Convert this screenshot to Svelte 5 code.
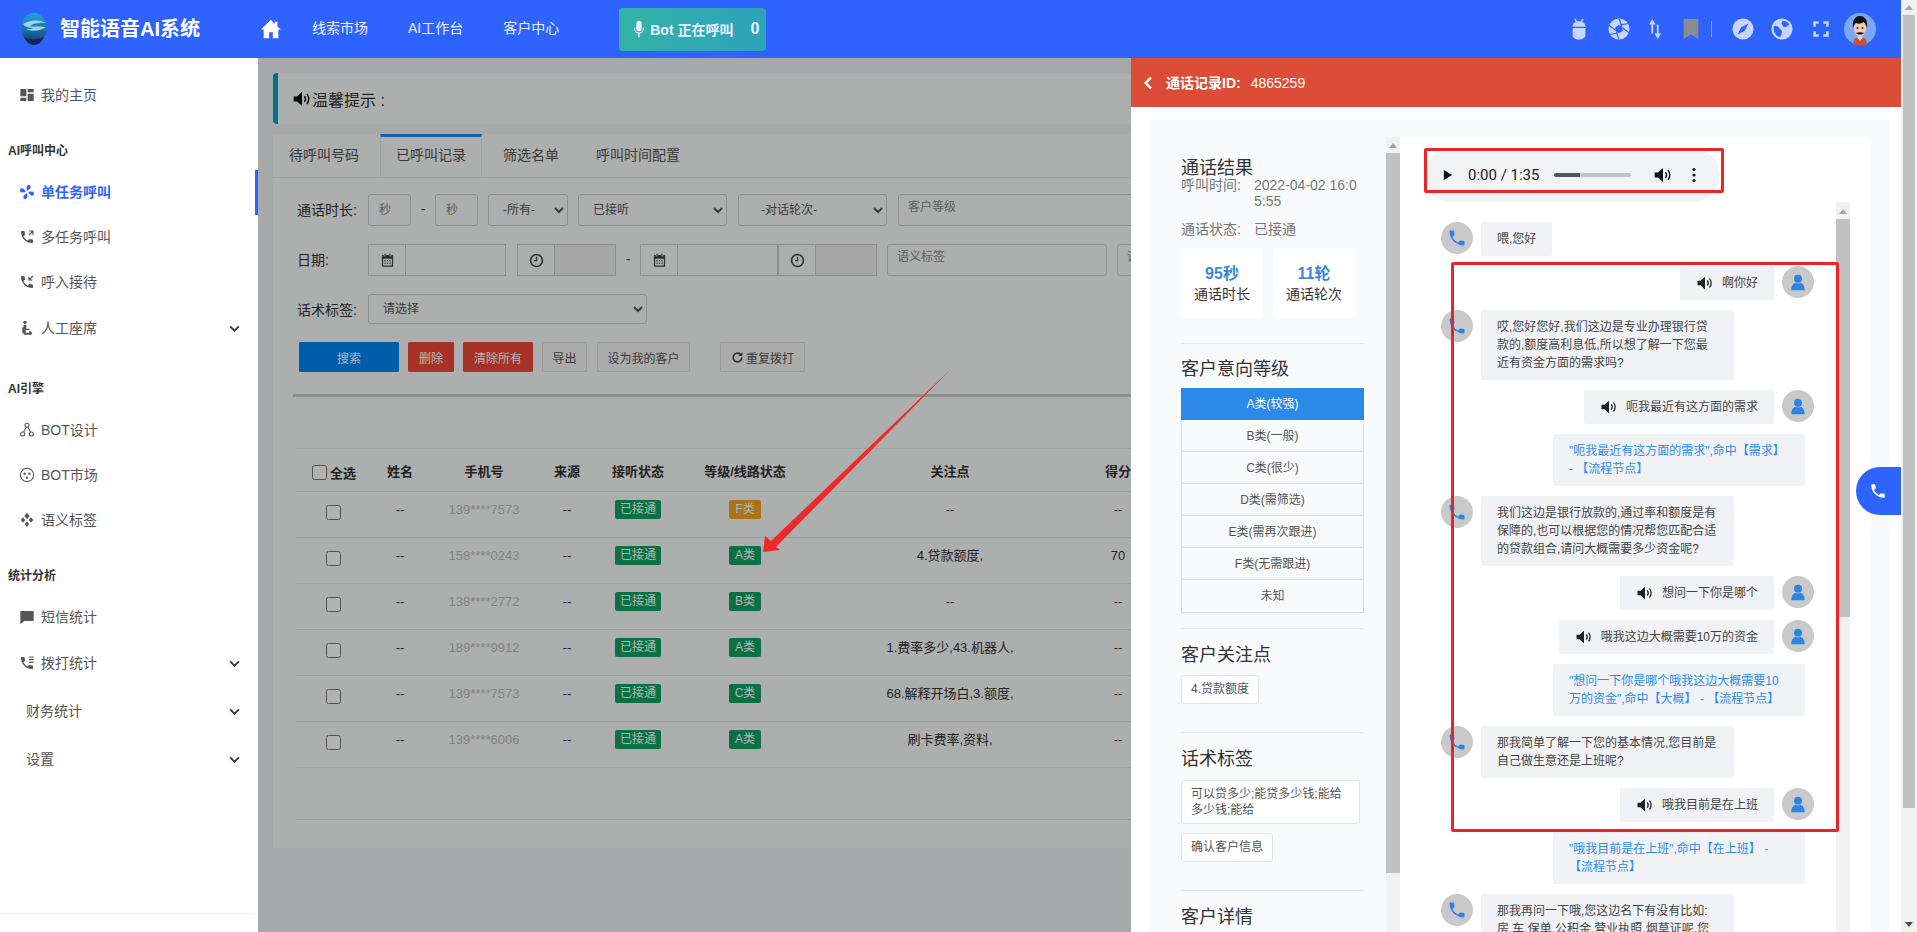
<script>
  const phone = '<path d="M6.6 10.8c1.4 2.8 3.8 5.1 6.6 6.6l2.2-2.2c.3-.3.7-.4 1-.2 1.1.4 2.3.6 3.6.6.6 0 1 .4 1 1V20c0 .6-.4 1-1 1C10.6 21 3 13.4 3 4c0-.6.4-1 1-1h3.5c.6 0 1 .4 1 1 0 1.3.2 2.5.6 3.6.1.3 0 .7-.2 1L6.6 10.8z"/>';
  const icons = {
    dash: '<path d="M2 3h9v11H2zM13 3h9v5h-9zM13 10h9v11h-9zM2 16h9v5H2z"/>',
    fan: '<path d="M12 10c-1-4-1-8 2-8.500 3.500-.5 5 3.500 1.500 6.500-1 .9-2.200 1.500-3.500 2zM14 12c4-1 8-1 8.500 2 .5 3.500-3.500 5-6.500 1.500-.9-1-1.500-2.200-2-3.500zM12 14c1 4 1 8-2 8.500-3.500.5-5-3.500-1.500-6.500 1-.9 2.200-1.500 3.500-2zM10 12c-4 1-8 1-8.500-2C1 6.500 5 5 8 8.500c.9 1 1.500 2.200 2 3.500z"/>',
    callout: phone + '<path d="M15 3h6v6M21 3l-6 6" fill="none" stroke="currentColor" stroke-width="1.800"/>',
    callin: phone + '<path d="M21 3l-6 6M15 4v5h5" fill="none" stroke="currentColor" stroke-width="1.800"/>',
    seat: '<circle cx="9" cy="3.500" r="2.500"/><path d="M7 7h4v6h5v2h-5.500L10 14v5h8v3H7zM5 11v9h2v-9z"/><path d="M15 17h3l2 4-2 1-1.500-3H15z"/>',
    nodes: '<g fill="none" stroke="currentColor" stroke-width="1.600"><circle cx="12" cy="5" r="3"/><circle cx="5.500" cy="18" r="3"/><circle cx="18.500" cy="18" r="3"/><path d="M10.500 8 7 15M13.500 8l3.500 7"/></g>',
    market: '<circle cx="12" cy="12" r="10" fill="none" stroke="currentColor" stroke-width="1.600"/><circle cx="8.500" cy="10" r="1.800"/><circle cx="15.500" cy="10" r="1.800"/><circle cx="12" cy="16" r="1.800"/>',
    tags: '<path d="M12 1l4 5-4 5-4-5zM6 8l3.500 4L6 16l-3.500-4zM18 8l3.500 4-3.500 4-3.500-4zM12 14l3 4-3 5-3-5z"/>',
    sms: '<path d="M2 3h20v15H8l-6 5z"/>',
    calllist: phone + '<path d="M15 3h7M15 7h7M15 11h7" fill="none" stroke="currentColor" stroke-width="1.800"/>',
    chev: '<path d="M5 8.500l7 7 7-7" fill="none" stroke="currentColor" stroke-width="2.800"/>',
    home: '<path d="M12 2 1 12.500h3V22h6v-6.500h4V22h6v-9.500h3L19 9.500V4h-3v2.700z"/>',
    mic: '<path d="M12 1a3.500 3.500 0 0 0-3.500 3.500v7a3.500 3.500 0 0 0 7 0v-7A3.500 3.500 0 0 0 12 1zM5.500 10v1.500a6.500 6.500 0 0 0 5.500 6.400V23h2v-5.100a6.500 6.500 0 0 0 5.500-6.400V10h-1.500v1.500a5 5 0 0 1-10 0V10z"/>',
    android: '<path d="M7.500 1l2 3.500M16.500 1l-2 3.500" stroke="currentColor" stroke-width="1.500"/><path d="M12 3.500c-4 0-7 2.500-7 6h14c0-3.500-3-6-7-6zM5 11h14v7.500c0 3-3 5-7 5s-7-2-7-5z"/>',
    shutter: '<circle cx="12" cy="12" r="11.500"/><g stroke="#2f63ff" stroke-width="1.300"><path d="M12 .5l3 8.500M22.500 6l-9 1.500M23 16l-7-5M12 23.500 9 15M1.500 18l9-1.500M1 8l7 5"/></g><path d="M12 7.500l4 2.200v4.600l-4 2.200-4-2.200V9.700z" fill="#2f63ff"/>',
    arrows: '<path d="M9 1 5.500 7H8v10h2V7h2.500zM15 23l3.500-6H16V7h-2v10h-2.500z"/>',
    bookmark: '<path d="M4 1h16v22l-8-5-8 5z"/>',
    compass: '<circle cx="12" cy="12" r="11.500"/><path d="M18 6l-4 8-8 4 4-8z" fill="#2f63ff"/>',
    globe: '<circle cx="12" cy="12" r="11.500"/><path d="M3 9c3-1 5 0 6 2s3 2 3 4-1 4-2 6c-4-1-7-5-7-9zM13 3c3 0 6 2 7 4-2 1-3 3-5 3s-2-2-3-3 0-3 1-4z" fill="#2f63ff"/>',
    full: '<path d="M5 9.500V5h4.500M14.500 5H19v4.500M19 14.500V19h-4.500M9.500 19H5v-4.500" fill="none" stroke="currentColor" stroke-width="2.800"/>',
    sound: '<path d="M2 9v6h4l6 5.500v-17L6 9z"/><path d="M15 8.500c1.500 2 1.500 5 0 7M18 6c2.500 3.500 2.500 8.500 0 12" fill="none" stroke="currentColor" stroke-width="1.700"/>',
    cal: '<path d="M7 1h2v3H7zM15 1h2v3h-2zM3 3h3v2h3V3h6v2h3V3h3v19H3zM5 9v11h14V9z"/><path d="M7 11h2v2H7zM11 11h2v2h-2zM15 11h2v2h-2zM7 15h2v2H7zM11 15h2v2h-2zM15 15h2v2h-2z"/>',
    clock: '<circle cx="12" cy="12" r="9.500" fill="none" stroke="currentColor" stroke-width="2.500"/><path d="M11 6h2v7H8v-2h3z"/>',
    refresh: '<path d="M20 12a8 8 0 1 1-2.500-5.800" fill="none" stroke="currentColor" stroke-width="3"/><path d="M21 2v7h-7z"/>',
    back: '<path d="M15 4l-8 8 8 8" fill="none" stroke="currentColor" stroke-width="3.500"/>',
    person: '<circle cx="12" cy="8" r="4.800"/><path d="M4 22c0-6 3-8.500 5-9 1.800 1 4.200 1 6 0 2 .5 5 3 5 9z"/>',
    phone
  };

  const menu = [
    { t: 'item', icon: 'dash', label: '我的主页' },
    { t: 'head', label: 'AI呼叫中心' },
    { t: 'item', icon: 'fan', label: '单任务呼叫', active: true },
    { t: 'item', icon: 'callout', label: '多任务呼叫' },
    { t: 'item', icon: 'callin', label: '呼入接待' },
    { t: 'item', icon: 'seat', label: '人工座席', more: true, tall: true },
    { t: 'head', label: 'AI引擎', tall: true },
    { t: 'item', icon: 'nodes', label: 'BOT设计' },
    { t: 'item', icon: 'market', label: 'BOT市场' },
    { t: 'item', icon: 'tags', label: '语义标签' },
    { t: 'head', label: '统计分析' },
    { t: 'item', icon: 'sms', label: '短信统计' },
    { t: 'item', icon: 'calllist', label: '拨打统计', more: true, tall: true },
    { t: 'item', label: '财务统计', more: true, tall: true },
    { t: 'item', label: '设置', more: true, tall: true }
  ];

  const rows = [
    { phone: '139****7573', cls: 'F类', warn: true, focus: '--', score: '--' },
    { phone: '158****0243', cls: 'A类', focus: '4.贷款额度,', score: '70' },
    { phone: '138****2772', cls: 'B类', focus: '--', score: '--' },
    { phone: '189****9912', cls: 'A类', focus: '1.费率多少,43.机器人,', score: '--' },
    { phone: '139****7573', cls: 'C类', focus: '68.解释开场白,3.额度,', score: '--' },
    { phone: '139****6006', cls: 'A类', focus: '刷卡费率,资料,', score: '--' }
  ];

  const levels = ['A类(较强)', 'B类(一般)', 'C类(很少)', 'D类(需筛选)', 'E类(需再次跟进)', 'F类(无需跟进)', '未知'];

  const chat = [
    { k: 'bot', text: '喂,您好' },
    { k: 'user', text: '啊你好' },
    { k: 'bot', text: '哎,您好您好,我们这边是专业办理银行贷款的,额度高利息低,所以想了解一下您最近有资金方面的需求吗?' },
    { k: 'user', text: '呃我最近有这方面的需求' },
    { k: 'hit', text: '"呃我最近有这方面的需求",命中【需求】 - 【流程节点】' },
    { k: 'bot', text: '我们这边是银行放款的,通过率和额度是有保障的,也可以根据您的情况帮您匹配合适的贷款组合,请问大概需要多少资金呢?' },
    { k: 'user', text: '想问一下你是哪个' },
    { k: 'user', text: '哦我这边大概需要10万的资金' },
    { k: 'hit', text: '"想问一下你是哪个哦我这边大概需要10万的资金",命中【大概】 - 【流程节点】' },
    { k: 'bot', text: '那我简单了解一下您的基本情况,您目前是自己做生意还是上班呢?' },
    { k: 'user', text: '哦我目前是在上班' },
    { k: 'hit', text: '"哦我目前是在上班",命中【在上班】 - 【流程节点】' },
    { k: 'bot', text: '那我再问一下哦,您这边名下有没有比如:房,车,保单,公积金,营业执照,烟草证呢,您这边有其中的哪一个呢?' }
  ];
</script>

{#snippet ic(name, cls = '')}
  <svg class="ic {cls}" viewBox="0 0 24 24" fill="currentColor" aria-hidden="true">{@html icons[name]}</svg>
{/snippet}

<div class="page">
  <div class="viewport">
    <header class="top">
      <div class="brand">
        <svg class="logo" viewBox="0 0 28 36" aria-hidden="true">
          <defs>
            <linearGradient id="lg" x1="0" y1="0" x2="0" y2="1">
              <stop offset="0" stop-color="#1fa6d8" />
              <stop offset=".55" stop-color="#1a6fb0" />
              <stop offset="1" stop-color="#1b3a6b" />
            </linearGradient>
          </defs>
          <ellipse cx="14" cy="17" rx="13" ry="15" fill="url(#lg)" />
          <path d="M3 13c6-4 16-5 23-1-5-1-13 0-16 3 3 1 9 0 16 1-5 4-15 5-20 2 3 0 6 0 8-1-5 0-9-1-11-4z" fill="#9fd3e6" />
          <path d="M4 26c6 3 14 3 20 0-2 5-6 8-10 8s-8-3-10-8z" fill="#14284f" />
        </svg>
        <span class="title">智能语音AI系统</span>
      </div>
      <span class="home">{@render ic('home')}</span>
      <nav class="nav">
        <span>线索市场</span>
        <span>AI工作台</span>
        <span>客户中心</span>
      </nav>
      <div class="botbtn">
        {@render ic('mic', 'mic')}
        <span>Bot 正在呼叫</span>
        <b>0</b>
      </div>
      <div class="tools">
        <div class="toolgroup first">
          <span class="tool android">{@render ic('android')}</span>
          <span class="tool">{@render ic('shutter')}</span>
          <span class="tool">{@render ic('arrows')}</span>
          <span class="tool gray">{@render ic('bookmark')}</span>
        </div>
        <i class="vline"></i>
        <div class="toolgroup second">
          <span class="tool">{@render ic('compass')}</span>
          <span class="tool">{@render ic('globe')}</span>
          <span class="tool">{@render ic('full')}</span>
        </div>
        <svg class="avatar" viewBox="0 0 32 32" aria-hidden="true">
          <circle cx="16" cy="16" r="16" fill="#7ea6f4" />
          <path d="M9 32c0-6 3-8 7-8s7 2 7 8z" fill="#c8503e" />
          <path d="M13 24h6l-3 4z" fill="#f4d7c0" />
          <ellipse cx="16" cy="15" rx="6" ry="9" fill="#f1cdb0" />
          <path d="M9 15C8 6 12 3 16 3s8 3 7 12c-1-3-2-5-3-6-3 2-6 2-8 1-2 1-2 3-3 5z" fill="#141110" />
          <path d="M12 20c2-1 6-1 8 0-1 2-7 2-8 0z" fill="#1f1510" />
          <circle cx="13.500" cy="15" r=".9" fill="#222" /><circle cx="18.500" cy="15" r=".9" fill="#222" />
        </svg>
      </div>
    </header>

    <div class="body">
      <aside class="side">
        {#each menu as m}
          {#if m.t === 'head'}
            <div class="head" class:tall={m.tall}>{m.label}</div>
          {:else}
            <div class="item" class:active={m.active} class:tall={m.tall} class:plain={!m.icon}>
              {#if m.icon}{@render ic(m.icon, 'mi')}{/if}
              <span class="lbl">{m.label}</span>
              {#if m.more}{@render ic('chev', 'chev')}{/if}
            </div>
          {/if}
        {/each}
        <div class="sidefoot"></div>
      </aside>

      <main class="main">
        <div class="content">
          <div class="tip">{@render ic('sound', 'tipic')}<span>温馨提示 :</span></div>

          <section class="card">
            <div class="tabs">
              <span class="tab">待呼叫号码</span>
              <span class="tab on">已呼叫记录</span>
              <span class="tab">筛选名单</span>
              <span class="tab">呼叫时间配置</span>
            </div>

            <div class="filters">
              <div class="frow">
                <label class="flabel" for="d1">通话时长:</label>
                <input id="d1" class="ctl secs" placeholder="秒" />
                <span class="dash">-</span>
                <input class="ctl secs" placeholder="秒" />
                <select class="ctl s80"><option>-所有-</option></select>
                <select class="ctl s149"><option>已接听</option></select>
                <select class="ctl s149"><option>-对话轮次-</option></select>
                <input class="ctl tagbox" placeholder="客户等级" />
              </div>
              <div class="frow">
                <span class="flabel">日期:</span>
                <div class="group">
                  <span class="addon">{@render ic('cal', 'addic')}</span>
                  <span class="gfield date"></span>
                </div>
                <div class="group">
                  <span class="addon">{@render ic('clock', 'addic')}</span>
                  <span class="gfield time"></span>
                </div>
                <span class="dash">-</span>
                <div class="group">
                  <span class="addon">{@render ic('cal', 'addic')}</span>
                  <span class="gfield date"></span>
                </div>
                <div class="group joined">
                  <span class="addon">{@render ic('clock', 'addic')}</span>
                  <span class="gfield time"></span>
                </div>
                <input class="ctl tag2" placeholder="语义标签" />
                <input class="ctl tag3" placeholder="话术标签" />
              </div>
              <div class="frow short">
                <span class="flabel">话术标签:</span>
                <select class="ctl s279"><option>请选择</option></select>
              </div>
              <div class="btns">
                <button class="btn primary">搜索</button>
                <button class="btn danger d1">删除</button>
                <button class="btn danger d2">清除所有</button>
                <button class="btn d3">导出</button>
                <button class="btn d4">设为我的客户</button>
                <button class="btn d5">{@render ic('refresh', 'ref')}重复拨打</button>
              </div>
            </div>

            <div class="rule"></div>

            <table class="tbl">
              <colgroup>
                <col class="c1" /><col class="c2" /><col class="c3" /><col class="c4" /><col class="c5" /><col class="c6" /><col class="c7" /><col class="c8" />
              </colgroup>
              <thead>
                <tr>
                  <th class="all"><input type="checkbox" class="chk" /><span>全选</span></th>
                  <th>姓名</th>
                  <th>手机号</th>
                  <th>来源</th>
                  <th>接听状态</th>
                  <th>等级/线路状态</th>
                  <th>关注点</th>
                  <th>得分</th>
                </tr>
              </thead>
              <tbody>
                {#each rows as r}
                  <tr>
                    <td><input type="checkbox" class="chk" /></td>
                    <td>--</td>
                    <td class="num">{r.phone}</td>
                    <td>--</td>
                    <td><span class="badge st">已接通</span></td>
                    <td><span class="badge" class:warn={r.warn}>{r.cls}</span></td>
                    <td>{r.focus}</td>
                    <td>{r.score}</td>
                  </tr>
                {/each}
              </tbody>
            </table>
            <div class="tblfoot"></div>
          </section>
        </div>

        <div class="dim"></div>

        <div class="drawer">
          <div class="dhead">
            {@render ic('back', 'backic')}
            <b>通话记录ID:</b>
            <span>4865259</span>
          </div>
          <div class="dbody">
            <div class="dinner">
              <div class="info">
                <h3 class="h">通话结果</h3>
                <div class="meta"><span class="mk">呼叫时间:</span><span class="mv">2022-04-02 16:05:55</span></div>
                <div class="meta gap"><span class="mk">通话状态:</span><span class="mv">已接通</span></div>
                <div class="stats">
                  <div class="stat"><b>95秒</b><span>通话时长</span></div>
                  <div class="stat"><b>11轮</b><span>通话轮次</span></div>
                </div>

                <div class="part p1">
                  <h3 class="h">客户意向等级</h3>
                  <ul class="levels">
                    {#each levels as l, i}
                      <li class:sel={i === 0}>{l}</li>
                    {/each}
                  </ul>
                </div>

                <div class="part p2">
                  <h3 class="h">客户关注点</h3>
                  <span class="chip c-a">4.贷款额度</span>
                </div>

                <div class="part p3">
                  <h3 class="h">话术标签</h3>
                  <div class="tagtext">可以贷多少;能贷多少钱;能给多少钱;能给</div>
                  <span class="chip c-b">确认客户信息</span>
                </div>

                <div class="part p4">
                  <h3 class="h">客户详情</h3>
                </div>
              </div>

              <div class="bar barleft"><i class="up"></i><i class="thumb"></i></div>

              <div class="talk">
                <div class="audio">
                  <svg class="play" viewBox="0 0 12 14" aria-hidden="true"><path d="M1 1l10 6-10 6z" fill="#111" /></svg>
                  <span class="time">0:00 / 1:35</span>
                  <span class="track"><i></i></span>
                  {@render ic('sound', 'vol')}
                  <svg class="dots" viewBox="0 0 4 16" aria-hidden="true"><circle cx="2" cy="2.500" r="1.600" /><circle cx="2" cy="8" r="1.600" /><circle cx="2" cy="13.500" r="1.600" /></svg>
                </div>
                <div class="chatwrap">
                  <div class="chat">
                    {#each chat as c}
                      {#if c.k === 'hit'}
                        <div class="msg right"><div class="bubble hit">{c.text}</div></div>
                      {:else if c.k === 'user'}
                        <div class="msg right">
                          <div class="bubble">{@render ic('sound', 'say')}{c.text}</div>
                          <span class="ava">{@render ic('person', 'avaic')}</span>
                        </div>
                      {:else}
                        <div class="msg">
                          <span class="ava">{@render ic('phone', 'avaic')}</span>
                          <div class="bubble wide">{c.text}</div>
                        </div>
                      {/if}
                    {/each}
                  </div>
                  <div class="bar barchat"><i class="up"></i><i class="thumb"></i></div>
                </div>
              </div>
            </div>
          </div>
          <div class="floatcall">{@render ic('phone', 'floatic')}</div>
        </div>
      </main>
    </div>
  </div>

  <div class="pagebar"><i class="up"></i><i class="thumb"></i><i class="space"></i><i class="dn"></i></div>

  <i class="mark m1"></i>
  <i class="mark m2"></i>
  <svg class="arrow" viewBox="0 0 1917 932" aria-hidden="true">
    <polygon points="763,552 765,536 771,541 953,367 776,547 780,550" fill="#f0282a" />
  </svg>
</div>

<style>
  :global(body) { margin: 0; background: #fff; }
  .page {
    position: relative; display: flex; width: 1917px; height: 932px; overflow: hidden;
    font-family: "Liberation Sans", "Noto Sans CJK SC", sans-serif; font-size: 14px; color: #333;
  }
  .viewport { flex: 1; min-width: 0; display: flex; flex-direction: column; }
  .ic { display: block; width: 16px; height: 16px; flex: none; }

  /* header */
  .top { height: 58px; flex: none; display: flex; align-items: center; background: #2f63ff; color: #fff; }
  .brand { display: flex; align-items: center; gap: 12px; padding-left: 20px; }
  .logo { width: 28px; height: 36px; }
  .title { font-size: 20px; font-weight: 700; line-height: 28px; width: 141px; white-space: nowrap; }
  .home { margin-left: 59px; }
  .home :global(.ic) { width: 22px; height: 22px; }
  .nav { display: flex; gap: 40px; margin: 0 0 2px 30px; color: #e8eeff; line-height: 20px; }
  .botbtn {
    display: flex; align-items: center; width: 147px; height: 43px; box-sizing: border-box; margin-left: 60px; padding-left: 11px;
    border-radius: 4px; background: linear-gradient(90deg, #33b3a5, #2ea3bd); color: #eef; font-weight: 700;
  }
  .botbtn :global(.mic) { width: 18px; height: 18px; margin-right: 2px; }
  .botbtn b { margin-left: 17px; font-size: 16px; }
  .tools { margin-left: auto; padding-right: 25px; display: flex; align-items: center; color: #c6d6ff; }
  .toolgroup { display: flex; align-items: center; gap: 14px; }
  .toolgroup.second { gap: 17px; }
  .tool { width: 22px; height: 22px; display: block; }
  .tool :global(.ic) { width: 22px; height: 22px; }
  .android { margin-right: 4px; }
  .gray { color: #8b8b90; }
  .vline { width: 1px; height: 16px; background: #7f9eff; margin: 0 20px 0 9px; }
  .avatar { width: 32px; height: 32px; margin-left: 12px; }

  /* layout */
  .body { flex: 1; min-height: 0; display: flex; }
  .side { width: 258px; flex: none; display: flex; flex-direction: column; padding-top: 15px; box-sizing: border-box; background: #fff; color: #555; }
  .head { height: 52px; box-sizing: border-box; padding: 25px 0 0 8px; font-size: 12px; line-height: 16px; font-weight: 700; color: #333; }
  .head.tall { height: 55px; padding-top: 28px; }
  .item { height: 45px; display: flex; align-items: center; padding: 0 16px 2px 19px; box-sizing: border-box; }
  .item.tall { height: 48px; }
  .item.plain { padding-left: 26px; }
  .item.active { color: #2f63ff; font-weight: 700; border-right: 3px solid #2f63ff; padding-right: 13px; }
  .item :global(.mi) { margin-right: 6px; }
  .lbl { flex: 1; line-height: 20px; }
  .item :global(.chev) { width: 15px; height: 15px; color: #333; }
  .sidefoot { margin: auto 3px 0 0; height: 18px; border-top: 1px solid #eee; }

  .main { flex: 1; min-width: 0; position: relative; overflow: hidden; background: #f0f1f3; }
  .content { padding: 15px; }
  .dim { position: absolute; inset: 0; background: rgba(0, 0, 0, .3); }

  .tip {
    height: 51px; display: flex; align-items: center; box-sizing: border-box; padding-left: 14px; margin-bottom: 10px;
    background: #f8f9f9; border-left: 5px solid #009fc8; border-radius: 4px; font-size: 16px; color: #333;
  }
  .tip :global(.tipic) { width: 20px; height: 20px; color: #111; }
  .card { background: #f8f9f9; height: 714px; box-sizing: border-box; }
  .tabs { display: flex; gap: 5px; height: 44px; border-bottom: 1px solid #e8e8e8; box-sizing: border-box; }
  .tab { padding: 11px 16px 0; line-height: 20px; color: #555; box-sizing: border-box; }
  .tab.on { border-top: 3px solid #2589ff; padding-top: 8px; border-left: 1px solid #e8e8e8; border-right: 1px solid #e8e8e8; padding-left: 15px; padding-right: 15px; height: 44px; }

  .filters { padding: 16px 0 0 24px; }
  .frow { display: flex; align-items: stretch; height: 32px; margin-bottom: 18px; white-space: nowrap; width: 1400px; }
  .frow.short { height: 30px; }
  .flabel { width: 71px; flex: none; line-height: 32px; color: #333; }
  .ctl {
    box-sizing: border-box; height: 100%; margin: 0; padding: 0 8px; flex: none; border: 1px solid #ccc; border-radius: 3px; background: #f8f9f9;
    font: 12px "Liberation Sans", "Noto Sans CJK SC", sans-serif; color: #555; outline: none;
  }
  .ctl::placeholder { color: #888; opacity: 1; }
  .secs { width: 43px; padding: 0 10px; }
  .dash { width: 24px; flex: none; text-align: center; line-height: 30px; color: #444; }
  .s80 { width: 80px; margin-left: 10px; padding-left: 10px; }
  .s149 { width: 149px; margin-left: 10px; padding-left: 10px; }
  .s149 + .s149 { margin-left: 11px; padding-left: 18px; }
  .s279 { width: 279px; padding-left: 10px; }
  .tagbox { width: 300px; margin-left: 11px; padding: 0 9px 6px; }
  .group { display: flex; flex: none; box-sizing: border-box; border: 1px solid #ccc; }
  .group + .group { margin-left: 11px; }
  .dash + .group { margin-left: 0; }
  .group.joined { margin-left: 0; }
  .addon { width: 37px; display: flex; align-items: center; justify-content: center; border-right: 1px solid #ccc; box-sizing: border-box; }
  .addon :global(.addic) { width: 15px; height: 15px; color: #444; }
  .gfield { display: block; }
  .gfield.date { width: 99px; }
  .gfield.time { width: 60px; background: #eee; }
  .tag2 { width: 220px; margin-left: 10px; padding: 0 9px 6px; }
  .tag3 { width: 220px; margin-left: 10px; padding: 0 9px 6px; }

  .btns { display: flex; height: 30px; white-space: nowrap; }
  .btn {
    box-sizing: border-box; height: 30px; padding: 0; border: 1px solid #ddd; background: #f5f5f5; color: #555; display: flex; align-items: center; justify-content: center;
    font: 12px "Liberation Sans", "Noto Sans CJK SC", sans-serif; border-radius: 1px; flex: none;
  }
  .primary { width: 100px; margin-left: 2px; background: #0086f2; border-color: #0086f2; color: #fff; }
  .danger { background: #f04a3a; border-color: #f04a3a; color: #fff; }
  .d1 { width: 46px; margin-left: 9px; }
  .d2 { width: 70px; margin-left: 9px; }
  .d3 { width: 45px; margin-left: 9px; }
  .d4 { width: 93px; margin-left: 10px; }
  .d5 { width: 85px; margin-left: 30px; gap: 2px; }
  .btn :global(.ref) { width: 13px; height: 13px; color: #444; }

  .rule { height: 3px; margin: 22px 0 51px 20px; background: #ccc; width: 1400px; }

  .tbl { border-collapse: collapse; table-layout: fixed; width: 850px; margin-left: 23px; font-size: 13px; color: #333; }
  .c1 { width: 74px; } .c2 { width: 60px; } .c3 { width: 108px; } .c4 { width: 58px; }
  .c5 { width: 84px; } .c6 { width: 130px; } .c7 { width: 280px; } .c8 { width: 56px; }
  .tbl th { height: 42px; padding: 0; font-weight: 700; border-top: 1px solid #e6e6e6; border-bottom: 1px solid #e6e6e6; text-align: center; white-space: nowrap; }
  .tbl td { height: 46px; padding: 0 0 10px; border-bottom: 1px solid #e6e6e6; text-align: center; box-sizing: border-box; line-height: 18px; white-space: nowrap; }
  .tbl td:first-child { padding-bottom: 6px; }
  .tbl th.all { text-align: left; padding-left: 16px; }
  .all span { position: relative; top: 3px; margin-left: 3px; }
  .chk { width: 15px; height: 15px; margin: 0; vertical-align: middle; }
  .num { color: #bbb; }
  .badge { display: inline-block; padding: 2px 6px; min-width: 20px; border-radius: 2px; background: #11a264; color: #fff; font-size: 12px; line-height: 15px; }
  .badge.st { padding: 2px 5px; }
  .badge.warn { background: #f0a820; }
  .tblfoot { margin: 51px 0 0 23px; border-top: 1px solid #ddd; width: 1400px; }

  /* drawer */
  .drawer { position: absolute; top: 0; bottom: 0; right: 0; width: 770px; background: #fff; display: flex; flex-direction: column; overflow: hidden; }
  .dhead { height: 49px; flex: none; display: flex; align-items: center; background: #dc4c36; color: #fff; padding-left: 10px; line-height: 20px; }
  .dhead :global(.backic) { width: 16px; height: 16px; margin-right: 9px; }
  .dhead b { margin-right: 10px; }
  .dbody { flex: 1; min-height: 0; padding: 13px 12px 0 19px; }
  .dinner { height: 100%; box-sizing: border-box; padding: 17px 18px 0 0; background: #f9fafb; display: flex; }
  .info { width: 236px; flex: none; box-sizing: border-box; padding: 20px 22px 0 31px; overflow: hidden; }
  .h { margin: 0; height: 20px; font-size: 18px; line-height: 22px; font-weight: 400; color: #333; }
  .meta { display: flex; line-height: 16px; color: #777; }
  .meta.gap { margin-top: 12px; }
  .mk { width: 73px; flex: none; }
  .mv { width: 107px; word-break: break-all; }
  .stats { display: flex; gap: 10px; margin-top: 11px; }
  .stat { width: 82px; height: 70px; background: #fff; display: flex; flex-direction: column; align-items: center; padding-top: 16px; box-sizing: border-box; }
  .stat b { font-size: 16px; line-height: 20px; color: #3a86d8; }
  .stat span { line-height: 20px; color: #333; }
  .part { border-top: 1px solid #e8eaed; padding-top: 14px; }
  .p1 { margin-top: 25px; }
  .p2, .p3, .p4 { padding-top: 15px; }
  .p2 { margin-top: 15px; }
  .p3 { margin-top: 28px; }
  .p4 { margin-top: 28px; }
  .levels { list-style: none; margin: 10px 0 0; padding: 0; border: 1px solid #ddd; border-top: 0; font-size: 12px; color: #555; }
  .levels li { height: 32px; line-height: 33px; text-align: center; border-bottom: 1px solid #ddd; box-sizing: border-box; }
  .levels li:last-child { border-bottom: 0; }
  .levels li.sel { background: #2b8ae8; color: #fff; border-bottom: 0; margin: 0 -1px; }
  .chip { display: block; width: max-content; box-sizing: border-box; height: 29px; padding: 0 9px; border: 1px solid #e2e4e7; border-radius: 3px; background: #fff; font-size: 12px; line-height: 27px; color: #555; }
  .c-a { margin-top: 11px; }
  .c-b { margin-top: 9px; }
  .tagtext { width: 179px; height: 44px; margin-top: 12px; box-sizing: border-box; padding: 5px 9px; border: 1px solid #e2e4e7; border-radius: 3px; background: #fff; font-size: 12px; line-height: 16px; color: #555; }

  .bar { width: 14px; flex: none; background: #f1f1f1; display: flex; flex-direction: column; position: relative; }
  .bar .up, .pagebar .up { display: block; height: 0; width: 0; margin: 6px auto 5px; border: 4px solid transparent; border-top: 0; border-bottom: 5px solid #a3a3a3; }
  .bar .thumb { display: block; background: #c1c1c1; }
  .barleft .thumb { height: 720px; }
  .barchat .up { margin-top: 7px; margin-bottom: 5px; }
  .barchat .thumb { height: 398px; }

  .talk { flex: 1; min-width: 0; background: #fff; display: flex; flex-direction: column; padding-top: 11px; }
  .audio { width: 296px; height: 54px; flex: none; margin-left: 24px; box-sizing: border-box; padding-left: 19px; display: flex; align-items: center; background: #f1f3f4; border-radius: 27px; color: #111; }
  .play { width: 10px; height: 12px; margin-right: 15px; }
  .time { width: 70px; white-space: nowrap; font-family: Roboto, sans-serif; font-size: 15px; line-height: 20px; color: #222; }
  .track { display: block; width: 77px; height: 4px; margin-left: 16px; border-radius: 2px; background: #c4c5c6; overflow: hidden; }
  .track i { display: block; width: 26px; height: 4px; background: #555; }
  .audio :global(.vol) { width: 20px; height: 20px; margin-left: 22px; }
  .dots { width: 4px; height: 16px; margin-left: 19px; fill: #111; }
  .chatwrap { flex: 1; min-height: 0; width: 450px; display: flex; overflow: hidden; }
  .chat { flex: 1; min-width: 0; box-sizing: border-box; padding: 20px 22px 0 41px; overflow: hidden; }
  .msg { display: flex; gap: 8px; align-items: flex-start; margin-bottom: 10px; }
  .msg.right { justify-content: flex-end; }
  .ava { width: 32px; height: 32px; flex: none; border-radius: 50%; background: #c9c9c9; display: flex; align-items: center; justify-content: center; color: #2b85e4; }
  .ava :global(.avaic) { width: 20px; height: 20px; }
  .bubble { display: flex; align-items: center; box-sizing: border-box; padding: 8px 16px; background: #f0f2f5; font-size: 12px; line-height: 18px; color: #444; border-radius: 2px; }
  .bubble.wide { display: block; max-width: 253px; }
  .bubble :global(.say) { width: 18px; height: 18px; margin-right: 8px; color: #222; }
  .bubble.hit { display: block; width: 252px; margin-right: 9px; color: #2d8cf0; }

  .floatcall { position: absolute; right: 0; top: 409px; width: 45px; height: 48px; border-radius: 24px 0 0 24px; background: #2f63ff; color: #fff; display: flex; align-items: center; padding-left: 13px; box-sizing: border-box; }
  .floatcall :global(.floatic) { width: 18px; height: 18px; }

  /* page scrollbar */
  .pagebar { width: 16px; flex: none; display: flex; flex-direction: column; background: #f1f1f1; }
  .pagebar .up { margin: 5px auto 5px; }
  .pagebar .thumb { display: block; height: 793px; margin: 0 2px; background: #c1c1c1; }
  .pagebar .space { display: block; flex: 1; }
  .pagebar .dn { display: block; width: 0; height: 0; margin: 0 auto 5px; border: 4px solid transparent; border-bottom: 0; border-top: 5px solid #505050; }

  /* annotations drawn over the screenshot */
  .mark { position: absolute; box-sizing: border-box; border: 3px solid #e8262a; border-radius: 2px; pointer-events: none; }
  .m1 { left: 1424px; top: 148px; width: 300px; height: 45px; }
  .m2 { left: 1451px; top: 262px; width: 388px; height: 570px; }
  .arrow { position: absolute; inset: 0; width: 1917px; height: 932px; pointer-events: none; }
</style>
